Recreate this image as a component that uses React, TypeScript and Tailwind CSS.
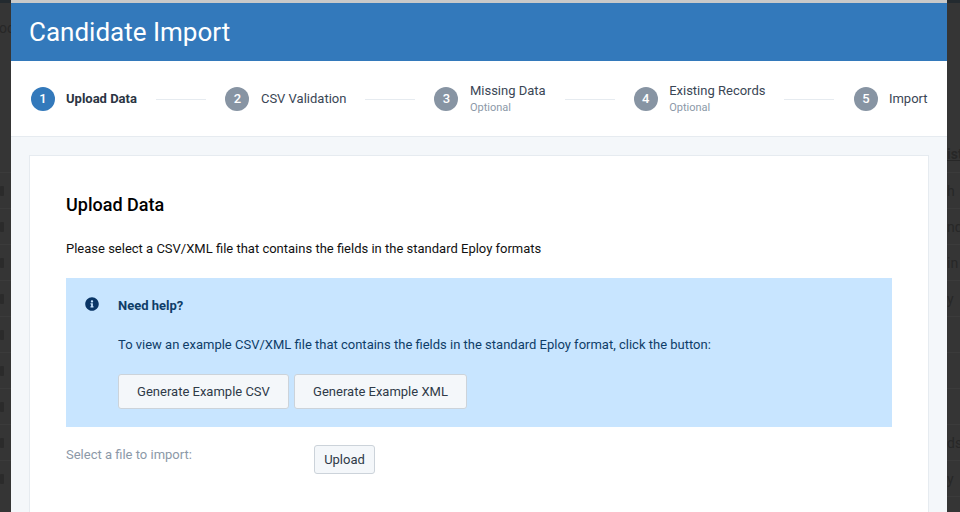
const steps = [
  { n: 1, label: "Upload Data", active: true },
  { n: 2, label: "CSV Validation" },
  { n: 3, label: "Missing Data", optional: true },
  { n: 4, label: "Existing Records", optional: true },
  { n: 5, label: "Import" },
];

const leftRows = ["", "", "", "", "", "", "", "", ""];
const rightRows = ["h", "nd", "in", "y", "", "", "", "ds", "y", ""];

function Step({ step }: { step: (typeof steps)[number] }) {
  return (
    <div
      className={`flex items-center shrink-0 ${
        step.n === 1 ? "gap-[11px] mr-[0.5px]" : step.n === 5 ? "gap-[11px] ml-[0.5px]" : "gap-[11.5px]"
      }`}
    >
      <div
        className={`w-6 h-6 rounded-full flex items-center justify-center text-white text-[13px] font-medium ${
          step.active ? "bg-[#3379bb]" : "bg-[#8794a3]"
        }`}
      >
        {step.n}
      </div>
      <div className="flex flex-col">
        <span
          className={`text-[13px] leading-[16px] ${
            step.active ? "font-bold text-[#2b3543]" : "text-[#3a4655]"
          }`}
        >
          {step.label}
        </span>
        {step.optional && (
          <span className="text-[11px] leading-[14px] mt-[2px] text-[#8c99a8]">Optional</span>
        )}
      </div>
    </div>
  );
}

function Button({ children, className = "" }: { children: string; className?: string }) {
  return (
    <button
      className={`bg-[#f4f7fa] border border-[#ccd3da] rounded-[3px] text-[13px] text-[#2f3a48] ${className}`}
    >
      {children}
    </button>
  );
}

export default function App() {
  return (
    <div className="h-[512px] overflow-hidden flex bg-[#353535] font-['Roboto',sans-serif]">
      <div className="w-[11px] shrink-0 overflow-hidden flex flex-col">
        <div className="h-[3px] bg-[#232a2f] w-full shrink-0" />
        <div className="h-[169px] shrink-0 pt-[15px] pl-0 text-[14px] text-[#272727] whitespace-nowrap">
          <span className="block -ml-[1px]">oo</span>
        </div>
        {leftRows.map((_, i) => (
          <div key={i} className="h-[36px] shrink-0 border-t border-[#3b3b3b] flex items-center">
            <div className="w-[4px] h-[10px] rounded-[1px] bg-[#2b2b2b]" />
          </div>
        ))}
      </div>

      <div className="flex-1 flex flex-col bg-[#f4f7fa] min-w-0">
        <div className="h-[3px] bg-[#c9c9c9] shrink-0" />
        <div className="h-[58px] bg-[#3379bb] shrink-0 flex items-center pl-[18px]">
          <h1 className="text-[26px] text-white">Candidate Import</h1>
        </div>
        <div className="h-[76px] bg-white border-b border-[#e6ebf0] shrink-0 flex items-center pl-5 gap-[19px] pt-[1px]">
          {steps.map((step, i) => (
            <div key={step.n} className="flex items-center gap-[19px]">
              <Step step={step} />
              {i < 4 && <div className="w-[50px] h-px bg-[#e6ebf0]" />}
            </div>
          ))}
        </div>
        <div className="flex-1 pt-[18px] pl-[18px] pr-[18px] min-h-0">
          <div className="h-full bg-white border border-[#e6ebf0] border-b-0 pt-[37px] pl-9 pr-9">
            <h2 className="text-[18px] leading-[24px] font-medium text-black">Upload Data</h2>
            <p className="text-[13px] leading-[16px] mt-[24px] text-[#111]">
              Please select a CSV/XML file that contains the fields in the standard Eploy formats
            </p>
            <div className="bg-[#c8e5ff] h-[149px] mt-[21px] flex pl-[19px] pt-[20px] text-[#0f3d68]">
              <svg viewBox="0 0 512 512" className="w-[14px] h-[14px] -mt-px shrink-0 fill-[#0a3566]">
                <path d="M256 8C119 8 8 119 8 256s111 248 248 248 248-111 248-248S393 8 256 8zm0 110c23 0 42 19 42 42s-19 42-42 42-42-19-42-42 19-42 42-42zm56 254c0 7-5 12-12 12h-88c-7 0-12-5-12-12v-24c0-7 5-12 12-12h12v-64h-12c-7 0-12-5-12-12v-24c0-7 5-12 12-12h64c7 0 12 5 12 12v100h12c7 0 12 5 12 12v24z" />
              </svg>
              <div className="ml-[19px]">
                <div className="text-[13px] leading-[16px] font-bold">Need help?</div>
                <p className="text-[13px] leading-[16px] mt-[23px]">
                  To view an example CSV/XML file that contains the fields in the standard Eploy format, click the button:
                </p>
                <div className="flex gap-[5px] mt-[21px]">
                  <Button className="w-[171px] h-[35px]">Generate Example CSV</Button>
                  <Button className="w-[173px] h-[35px]">Generate Example XML</Button>
                </div>
              </div>
            </div>
            <div className="flex mt-[18px]">
              <div className="w-[248px] pt-px text-[13px] leading-[18px] text-[#8c99a8]">Select a file to import:</div>
              <Button className="w-[61px] h-[29px]">Upload</Button>
            </div>
          </div>
        </div>
      </div>

      <div className="w-[13px] shrink-0 overflow-hidden flex flex-col text-[14px] leading-[16px] text-[#272727]">
        <div className="h-[3px] bg-[#232a2f] shrink-0" />
        <div className="h-[143px] shrink-0" />
        <div className="h-[26px] shrink-0 font-bold underline whitespace-nowrap">ist</div>
        {rightRows.map((t, i) => (
          <div key={i} className="h-[36px] shrink-0 border-t border-[#3b3b3b] flex items-center whitespace-nowrap">
            {t}
          </div>
        ))}
      </div>
    </div>
  );
}
